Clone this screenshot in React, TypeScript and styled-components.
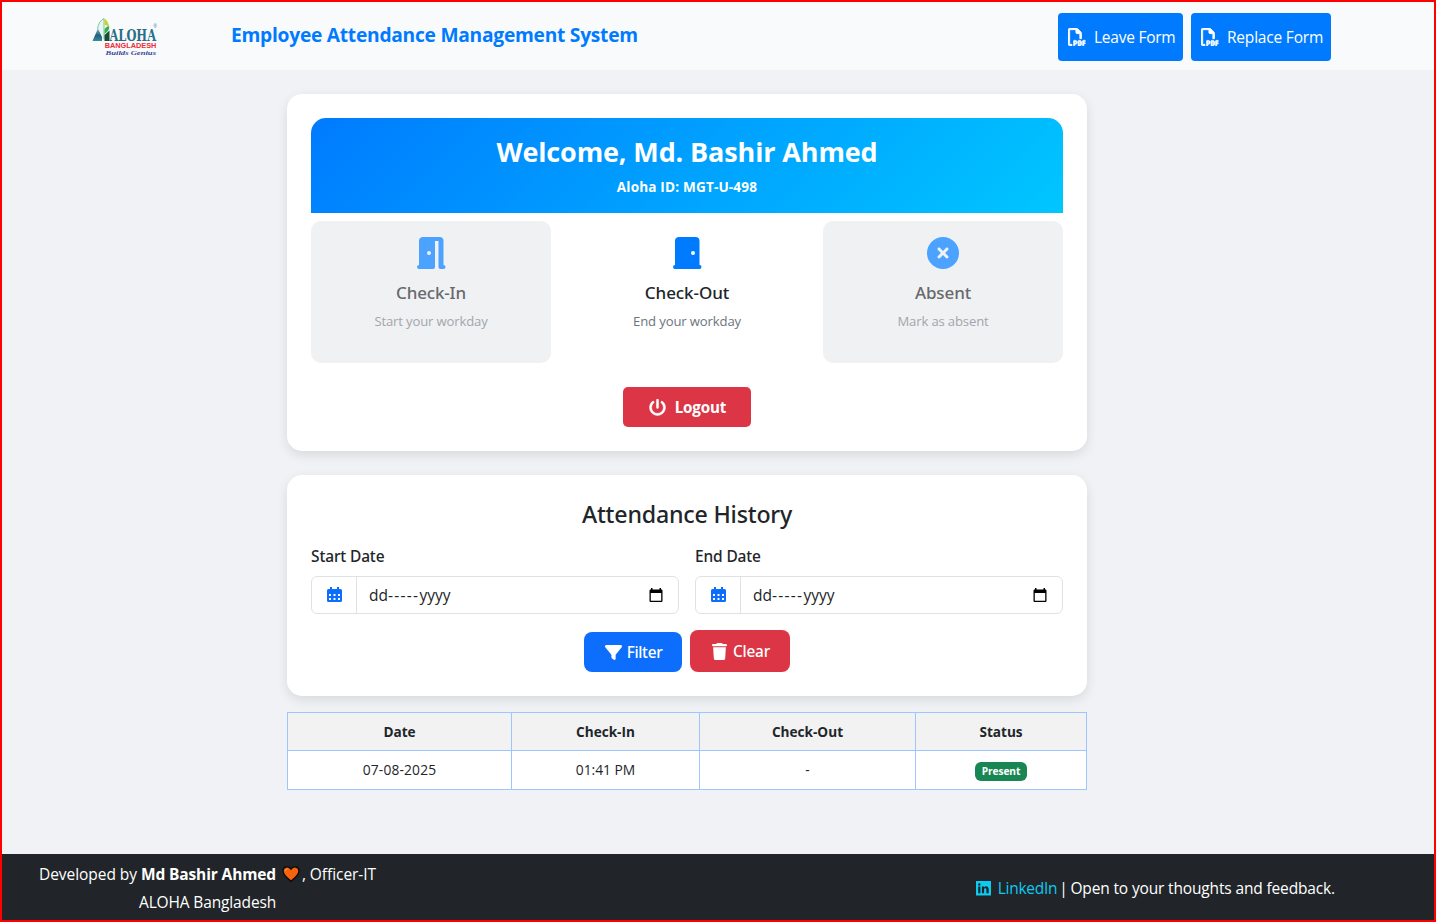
import React from "react";
import styled, { createGlobalStyle } from "styled-components";
import { FaCircleXmark, FaFilter, FaPowerOff, FaRegFilePdf, FaTrash } from "react-icons/fa6";

const GlobalStyle = createGlobalStyle`
  * { box-sizing: border-box; }
  body { margin: 0; background: #f0f2f5; color: #212529; font-family: "Open Sans", "Noto Sans", sans-serif; }
  svg { display: block; flex: none; }
`;

const Page = styled.div`
  width: 1436px;
  height: 922px;
  display: flex;
  flex-direction: column;
  border: 2px solid #ff0000;
  background: #f0f2f5;
`;

const Text = styled.span<{ $size: number; $weight?: number; $spacing?: number; $color?: string; $line?: number }>`
  display: block;
  white-space: pre;
  font-family: ${(p) => (p.$weight === 500 ? '"Noto Sans"' : '"Open Sans"')}, sans-serif;
  font-size: ${(p) => p.$size}px;
  font-weight: ${(p) => p.$weight ?? 400};
  letter-spacing: ${(p) => p.$spacing ?? 0}px;
  line-height: ${(p) => p.$line ?? 24}px;
  color: ${(p) => p.$color ?? "inherit"};
`;

const Navbar = styled.header`
  height: 68px;
  flex: none;
  display: flex;
  align-items: flex-start;
  padding: 11px 103px 0 90px;
  background: #f8fafc;
`;

const LogoSlot = styled.div`
  width: 139px;
  padding-top: 4px;
`;

const Brand = styled.h1`
  margin: 10px auto 0 0;
  font-weight: inherit;
`;

const NavButtons = styled.nav`
  display: flex;
  gap: 8px;
`;

const FormButton = styled.button<{ $width: number }>`
  width: ${(p) => p.$width}px;
  height: 48px;
  display: flex;
  align-items: center;
  gap: 8px;
  padding: 0 0 0 10px;
  border: 0;
  border-radius: 4px;
  background: #007bff;
  color: #fff;
  svg { stroke: currentColor; stroke-width: 22px; }
`;

const Main = styled.main`
  width: 800px;
  margin: 24px 0 0 285px;
  flex: 1;
`;

const Card = styled.section<{ $height: number }>`
  height: ${(p) => p.$height}px;
  padding: 24px;
  border-radius: 15px;
  background: #fff;
  box-shadow: 0 4px 12px rgba(0, 0, 0, 0.1);
  display: flex;
  flex-direction: column;
  align-items: center;
  & + & { margin-top: 24px; }
`;

const Banner = styled.div`
  width: 100%;
  height: 95px;
  padding-top: 16px;
  border-radius: 15px 15px 0 0;
  background: linear-gradient(135deg, #007bff, #00c6ff);
  color: #fff;
  text-align: center;
`;

const Tiles = styled.div`
  width: 100%;
  display: grid;
  grid-template-columns: repeat(3, 1fr);
  gap: 16px;
  margin-top: 8px;
`;

const Tile = styled.div<{ $disabled?: boolean }>`
  height: 142px;
  padding-top: 16px;
  display: flex;
  flex-direction: column;
  align-items: center;
  border-radius: 10px;
  background: ${(p) => (p.$disabled ? "#f0f1f3" : "#fff")};
  color: ${(p) => (p.$disabled ? "#67696c" : "#212529")};
  svg { color: ${(p) => (p.$disabled ? "#4ca3ff" : "#007bff")}; margin-bottom: 12px; }
`;

const ActionButton = styled.button<{ $width: number; $height: number; $bg: string; $radius: number; $gap: number }>`
  width: ${(p) => p.$width}px;
  height: ${(p) => p.$height}px;
  display: flex;
  align-items: center;
  justify-content: center;
  gap: ${(p) => p.$gap}px;
  padding: 0 0 0 1px;
  border: 0;
  border-radius: ${(p) => p.$radius}px;
  background: ${(p) => p.$bg};
  color: #fff;
`;

const LogoutRow = styled.div`
  margin-top: 24px;
  svg { stroke: currentColor; stroke-width: 14px; }
`;

const Fields = styled.div`
  width: 100%;
  display: grid;
  grid-template-columns: 1fr 1fr;
  gap: 16px;
  margin-top: 14px;
`;

const InputGroup = styled.div`
  height: 38px;
  margin-top: 8px;
  display: flex;
  border: 1px solid #dee2e6;
  border-radius: 6px;
`;

const Addon = styled.div`
  width: 45px;
  display: flex;
  align-items: center;
  justify-content: center;
  border-right: 1px solid #dee2e6;
  color: #0d6efd;
`;

const DateValue = styled.div`
  flex: 1;
  display: flex;
  align-items: center;
  padding: 0 15px 0 12px;
  svg { margin-left: auto; color: #000; }
`;

const FilterRow = styled.div`
  display: flex;
  align-items: flex-end;
  gap: 8px;
  margin-top: 16px;
`;

const Table = styled.table`
  width: 800px;
  margin-top: 16px;
  border-collapse: collapse;
  table-layout: fixed;
  background: #fff;
  th, td { border: 1px solid #9ec5fe; padding: 0; height: 38px; text-align: center; }
  td { height: 39px; }
  th { background: #f2f2f2; }
`;

const Badge = styled.div`
  width: 52px;
  height: 19px;
  margin: 3px auto 0;
  border-radius: 6px;
  background: #198754;
  color: #fff;
`;

const Footer = styled.footer`
  height: 66px;
  flex: none;
  display: flex;
  justify-content: space-between;
  padding: 8px 99px 0 37px;
  background: #212529;
  color: #fff;
`;

const Credits = styled.div`
  display: flex;
  flex-direction: column;
  align-items: center;
  gap: 4px;
`;

const CreditLine = styled.div`
  display: flex;
  align-items: center;
  svg { margin: 0 2px; }
`;

const Contact = styled.div`
  height: 24px;
  margin-top: 14px;
  display: flex;
  align-items: center;
`;

const ContactLink = styled.a`
  display: flex;
  align-items: center;
  gap: 7px;
  margin-right: 2px;
  color: #0dcaf0;
`;

const AlohaLogo = () => (
  <svg width="72" height="42" viewBox="0 0 72 42">
    <defs>
      <linearGradient id="aloha" x1="0" y1="0" x2="0" y2="1">
        <stop offset="0" stopColor="#7db5c9" />
        <stop offset="0.55" stopColor="#1f6379" />
        <stop offset="1" stopColor="#3d8aa3" />
      </linearGradient>
    </defs>
    <path d="M0.500 24 L6 11.500 L10 20 V24 Z" fill="url(#aloha)" />
    <path d="M12 1.500 V23 H10 V19 L6 11 Q7.500 4 12 1.500Z" fill="#e9f5f0" />
    <path d="M5.500 12 Q6.500 4 12 1.500 V22" fill="none" stroke="#6dbd9a" strokeWidth=".9" />
    <path d="M12.500 1.500 Q17 4.500 17 11 Q15 8 12.500 7.500Z" fill="#c5d52f" />
    <path d="M12.500 13 Q13.500 9 17.200 9.500 Q18 13 12.500 17Z" fill="#35ad58" />
    <path d="M12.500 18 L17.500 13.500 V24 H12.500Z" fill="#174e36" />
    <text x="17.500" y="23.700" textLength="46.500" lengthAdjust="spacingAndGlyphs" fontFamily="DejaVu Serif, serif" fontWeight="700" fontSize="16.500" fill="#276f87">ALOHA</text>
    <text x="61.500" y="10.500" fontFamily="Liberation Sans, sans-serif" fontSize="4.500" fill="#276f87">®</text>
    <text x="12.800" y="31" textLength="51.500" lengthAdjust="spacingAndGlyphs" fontFamily="Liberation Sans, sans-serif" fontWeight="700" fontSize="6.500" fill="#ec2c35">BANGLADESH</text>
    <text x="13.500" y="37.500" textLength="50.500" lengthAdjust="spacingAndGlyphs" fontFamily="Liberation Serif, serif" fontStyle="italic" fontWeight="700" fontSize="7" fill="#3d4795">Builds Genius</text>
  </svg>
);

const DoorOpen = () => (
  <svg width="29" height="32" viewBox="0.5 0 29 32" fill="currentColor">
    <path fillRule="evenodd" d="M6 0H23a4 4 0 0 1 4 4V28a2 2 0 0 1 0 4H24a2 2 0 0 1-2-2V4H18.500V30a2 2 0 0 1-2 2H2.500a2 2 0 0 1 0-4V4A4 4 0 0 1 6 0ZM12.500 14a2 2 0 1 0 0 4 2 2 0 0 0 0-4Z" />
  </svg>
);

const DoorClosed = () => (
  <svg width="29" height="32" viewBox="0.5 0 29 32" fill="currentColor">
    <path fillRule="evenodd" d="M6 0H23a4 4 0 0 1 4 4V28a2 2 0 0 1 0 4H2.500a2 2 0 0 1 0-4V4A4 4 0 0 1 6 0ZM20.500 14a2 2 0 1 0 0 4 2 2 0 0 0 0-4Z" />
  </svg>
);

const CalendarDots = () => (
  <svg width="15" height="16" viewBox="0 0 15 16" fill="currentColor">
    <path fillRule="evenodd" d="M3 0H5V2H10V0H12V2H13.500A1.500 1.500 0 0 1 15 3.500V13.500A1.500 1.500 0 0 1 13.500 15H1.500A1.500 1.500 0 0 1 0 13.500V3.500A1.500 1.500 0 0 1 1.500 2H3ZM2 7V9H4V7ZM6.500 7V9H8.500V7ZM11 7V9H13V7ZM2 11V13H4V11ZM6.500 11V13H8.500V11ZM11 11V13H13V11Z" />
  </svg>
);

const PickerIcon = () => (
  <svg width="14" height="16" viewBox="0 0 14 16" fill="currentColor">
    <path fillRule="evenodd" d="M2 1H3.500V2.500H10.500V1H12V2.500H12.500A1 1 0 0 1 13.500 3.500V14A1 1 0 0 1 12.500 15H1.500A1 1 0 0 1 .5 14V3.500A1 1 0 0 1 1.500 2.500H2ZM1.800 6V13.700H12.200V6Z" />
  </svg>
);

const Heart = () => (
  <svg width="18" height="18" viewBox="0 0 18 18">
    <path d="M9 16.300 C5 13 1 10 1 6 C1 1.500 6.500 .5 9 4 C11.500 .5 17 1.500 17 6 C17 10 13 13 9 16.300Z" fill="#f7630c" stroke="#0b0b0b" strokeWidth="1.400" />
    <path d="M3.500 6 Q3.700 4 5.500 3.800" fill="none" stroke="#ff9a5c" strokeWidth="1" />
  </svg>
);

const LinkedInMark = () => (
  <svg width="15" height="15" viewBox="0 0 15 15" fill="#0dcaf0">
    <path fillRule="evenodd" d="M0 0H15V14.500H0ZM2.200 5.500V12.300H4.400V5.500ZM3.300 2.200A1.250 1.250 0 1 0 3.300 4.700 1.250 1.250 0 0 0 3.300 2.200ZM5.900 5.500V12.300H8.100V8.800C8.100 6.800 10.400 6.900 10.400 8.800V12.300H12.700V8.300C12.700 5 9.300 4.600 8 6.400V5.500Z" />
  </svg>
);

const DateField = ({ label }: { label: string }) => (
  <div>
    <Text $size={15.5} $weight={500} $spacing={-0.15}>{label}</Text>
    <InputGroup>
      <Addon><CalendarDots /></Addon>
      <DateValue>
        <Text $size={15.5}>dd</Text>
        <Text $size={15.5} $spacing={1.3}>-----</Text>
        <Text $size={15.5}>yyyy</Text>
        <PickerIcon />
      </DateValue>
    </InputGroup>
  </div>
);

export default function App() {
  return (
    <>
      <GlobalStyle />
      <Page>
        <Navbar>
          <LogoSlot><AlohaLogo /></LogoSlot>
          <Brand><Text $size={19.2} $weight={700} $spacing={-0.25} $color="#007bff">Employee Attendance Management System</Text></Brand>
          <NavButtons>
            <FormButton $width={125}><FaRegFilePdf size={18} /><Text $size={15.5} $spacing={-0.25}>Leave Form</Text></FormButton>
            <FormButton $width={140}><FaRegFilePdf size={18} /><Text $size={15.5} $spacing={-0.2}>Replace Form</Text></FormButton>
          </NavButtons>
        </Navbar>
        <Main>
          <Card $height={357}>
            <Banner>
              <Text $size={27} $weight={700} $spacing={-0.13} $line={36}>Welcome, Md. Bashir Ahmed</Text>
              <Text $size={13.6} $weight={700} $spacing={0.15} $line={34}>Aloha ID: MGT-U-498</Text>
            </Banner>
            <Tiles>
              <Tile $disabled>
                <DoorOpen />
                <Text $size={17} $weight={500} $spacing={-0.15}>Check-In</Text>
                <Text $size={13.1} $spacing={-0.15} $line={32} $color="#a2a6aa">Start your workday</Text>
              </Tile>
              <Tile>
                <DoorClosed />
                <Text $size={17} $weight={500} $spacing={-0.08}>Check-Out</Text>
                <Text $size={13.1} $spacing={-0.13} $line={32} $color="#6c757d">End your workday</Text>
              </Tile>
              <Tile $disabled>
                <FaCircleXmark size={32} />
                <Text $size={17} $weight={500} $spacing={-0.12}>Absent</Text>
                <Text $size={13.1} $spacing={-0.15} $line={32} $color="#a2a6aa">Mark as absent</Text>
              </Tile>
            </Tiles>
            <LogoutRow>
              <ActionButton $width={128} $height={40} $bg="#dc3545" $radius={5} $gap={9}>
                <FaPowerOff size={17} /><Text $size={15.2} $weight={700} $spacing={-0.15}>Logout</Text>
              </ActionButton>
            </LogoutRow>
          </Card>
          <Card $height={221}>
            <Text $size={23.2} $weight={500} $spacing={-0.2} $line={31}>Attendance History</Text>
            <Fields>
              <DateField label="Start Date" />
              <DateField label="End Date" />
            </Fields>
            <FilterRow>
              <ActionButton $width={98} $height={40} $bg="#0d6efd" $radius={8} $gap={5}>
                <FaFilter size={17} /><Text $size={15.3} $weight={500} $spacing={-0.3}>Filter</Text>
              </ActionButton>
              <ActionButton $width={100} $height={42} $bg="#dc3545" $radius={8} $gap={5}>
                <FaTrash size={17} /><Text $size={15.3} $weight={500} $spacing={-0.2}>Clear</Text>
              </ActionButton>
            </FilterRow>
          </Card>
          <Table>
            <colgroup><col width="224" /><col width="188" /><col width="216" /><col width="171" /></colgroup>
            <thead>
              <tr>
                {["Date", "Check-In", "Check-Out", "Status"].map((h) => (
                  <th key={h}><Text $size={13.6} $weight={700}>{h}</Text></th>
                ))}
              </tr>
            </thead>
            <tbody>
              <tr>
                <td><Text $size={13.8} $spacing={0.15}>07-08-2025</Text></td>
                <td><Text $size={13.8}>01:41 PM</Text></td>
                <td><Text $size={13.8}>-</Text></td>
                <td><Badge><Text $size={10.2} $weight={700} $spacing={-0.1} $line={18}>Present</Text></Badge></td>
              </tr>
            </tbody>
          </Table>
        </Main>
        <Footer>
          <Credits>
            <CreditLine>
              <Text $size={15.5} $spacing={-0.05}>{"Developed by "}</Text>
              <Text $size={15.5} $weight={700} $spacing={-0.13}>{"Md Bashir Ahmed "}</Text>
              <Heart />
              <Text $size={15.5} $spacing={-0.05}>, Officer-IT</Text>
            </CreditLine>
            <Text $size={15.5} $spacing={-0.14}>ALOHA Bangladesh</Text>
          </Credits>
          <Contact>
            <ContactLink>
              <LinkedInMark />
              <Text $size={15.5} $spacing={-0.28}>LinkedIn</Text>
            </ContactLink>
            <Text $size={15.5} $spacing={-1.2}>|</Text>
            <Text $size={15.5} $spacing={-0.15}>{" Open to your thoughts and feedback."}</Text>
          </Contact>
        </Footer>
      </Page>
    </>
  );
}
